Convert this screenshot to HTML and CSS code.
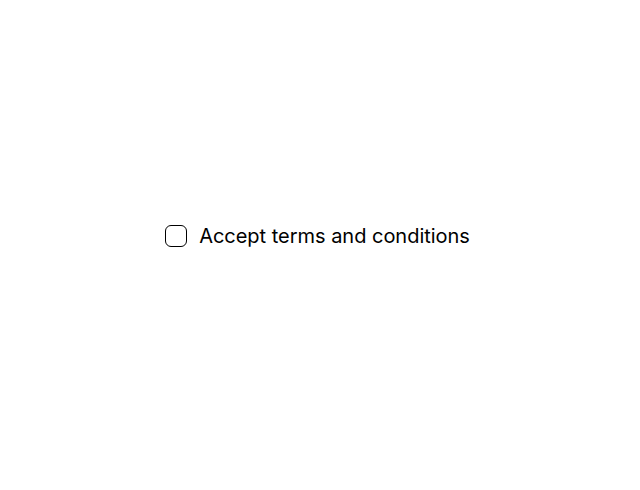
FILE: index.html
```html
<!DOCTYPE html>
<html>
<head>
<meta charset="utf-8">
<link rel="stylesheet" href="styles.css">
</head>
<body>
<div class="page">
  <label class="field">
    <span class="box"></span>
    <span class="label">Accept terms and conditions</span>
  </label>
</div>
</body>
</html>
```
FILE: styles.css
```css
html, body { margin: 0; padding: 0; background: #fff; }
.page {
  width: 640px;
  height: 490px;
  display: flex;
  align-items: center;
  justify-content: center;
  padding-bottom: 19px;
  padding-right: 5px;
  box-sizing: border-box;
  font-family: Inter, "Noto Sans", sans-serif;
}
.field { display: flex; align-items: center; gap: 12px; cursor: pointer; }
.box {
  width: 22px; height: 22px;
  box-sizing: border-box;
  border: 1.75px solid #000;
  border-radius: 6px;
  background: #fff;
}
.label { font-size: 20px; color: #000; letter-spacing: -0.02px; }
```
